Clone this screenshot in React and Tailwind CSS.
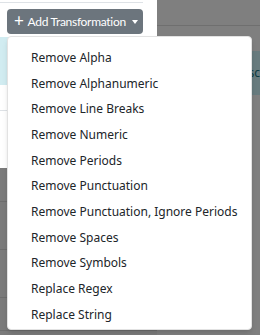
import React from "react";

const items = [
  "Remove Alpha",
  "Remove Alphanumeric",
  "Remove Line Breaks",
  "Remove Numeric",
  "Remove Periods",
  "Remove Punctuation",
  "Remove Punctuation, Ignore Periods",
  "Remove Spaces",
  "Remove Symbols",
  "Replace Regex",
  "Replace String",
];

const App = () => {
  return (
    <div
      className="relative w-[260px] h-[335px] overflow-hidden flex"
      style={{ fontFamily: '"Noto Sans", "Open Sans", sans-serif' }}
    >
      {/* page behind, left part */}
      <div className="w-[157px] flex flex-col bg-white">
        <div className="w-[143px] h-[3px] border-b border-[#dee2e6]" />
        <div className="h-[34px]" />
        <div className="h-[48px] bg-[#d1ecf1]" />
        <div className="h-[25px]" />
        <div className="h-px bg-[#dee2e6]" />
        <div className="h-[57px]" />
        <div className="flex-1 bg-[#7b7b7b] flex flex-col">
          <div className="h-[33px]" />
          <div className="h-px bg-[#6e6e6e]" />
          <div className="h-[47px]" />
          <div className="h-px bg-[#6e6e6e]" />
          <div className="h-[47px]" />
          <div className="h-px bg-[#6e6e6e]" />
          <div className="h-[32px]" />
          <div className="h-px bg-[#6e6e6e]" />
        </div>
      </div>

      {/* page behind, dimmed right part */}
      <div className="flex-1 flex flex-col bg-[#7f7f7f]">
        <div className="h-[25px]" />
        <div className="h-px bg-[#6f6f6f]" />
        <div className="h-[25px]" />
        <div className="h-[44px] bg-[#687b7e] flex items-center justify-end overflow-hidden">
          <span className="text-[12px] text-[#0c3a40] whitespace-nowrap">sc</span>
        </div>
      </div>

      {/* dropdown toggle */}
      <button
        className="absolute left-[7px] top-[9px] h-[25px] w-[136px] rounded bg-[#6c757d] text-white text-[12px] tracking-[-0.3px] whitespace-nowrap flex items-center pl-[7px] gap-[4px]"
        style={{ fontFamily: "Lato, sans-serif" }}
      >
        <span className="text-[17px] leading-none -mt-[2px]">+</span>
        <span>Add Transformation</span>
        <span className="ml-[2px] w-0 h-0 border-l-[3.5px] border-r-[3.5px] border-t-[4px] border-l-transparent border-r-transparent border-t-white" />
      </button>

      {/* dropdown menu */}
      <ul className="absolute left-[7px] top-[36px] w-[245px] h-[294px] bg-white rounded border border-[#e2e2e2] shadow-md py-[8px]">
        {items.map((item) => (
          <li
            key={item}
            className="h-[25.7px] flex items-center pl-[23px] text-[12px] text-[#212529] whitespace-nowrap"
          >
            {item}
          </li>
        ))}
      </ul>
    </div>
  );
};

export default App;
